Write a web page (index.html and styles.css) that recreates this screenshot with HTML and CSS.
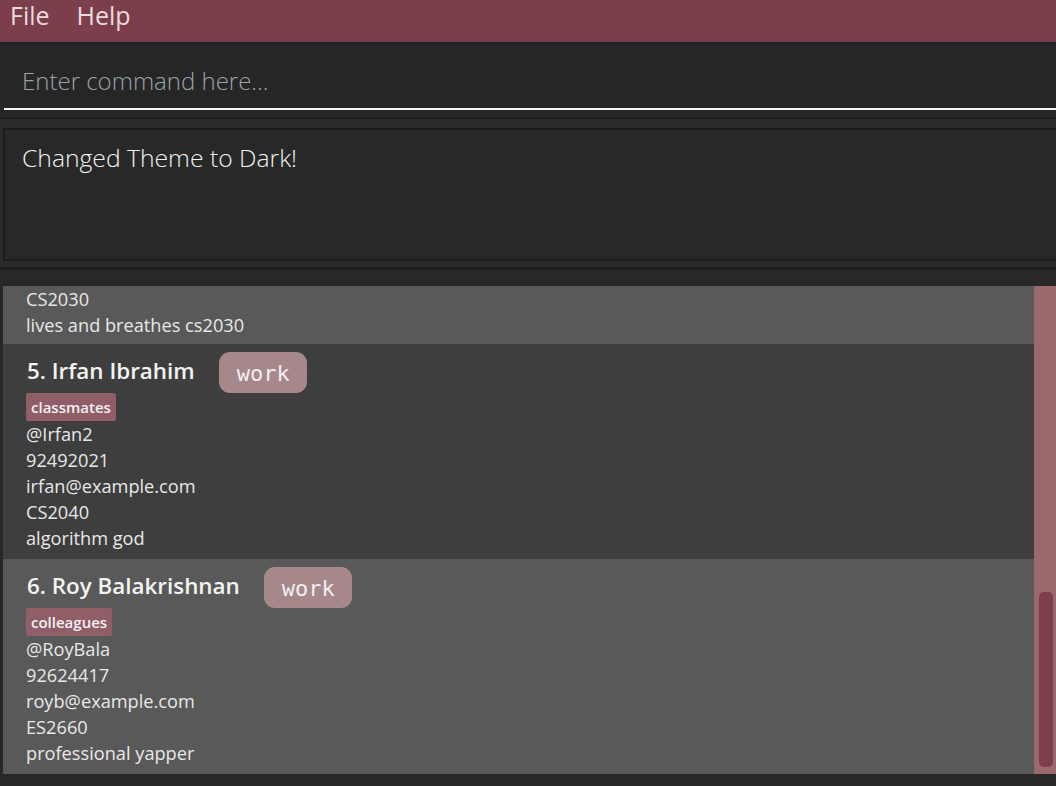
FILE: index.html
```html
<!DOCTYPE html>
<html lang="en">
<head>
<meta charset="utf-8">
<title>Address Book</title>
<link rel="stylesheet" href="styles.css">
</head>
<body>
<div class="app">
  <nav class="menubar">
    <span class="menu-item">File</span>
    <span class="menu-item">Help</span>
  </nav>
  <section class="command-pane">
    <div class="command-field">
      <input class="command-input" type="text" placeholder="Enter command here...">
    </div>
  </section>
  <section class="result-pane">
    <div class="result-box">Changed Theme to Dark!</div>
  </section>
  <section class="list-pane">
    <div class="list">
      <div class="card card-light card-partial">
        <div class="field">CS2030</div>
        <div class="field">lives and breathes cs2030</div>
      </div>
      <div class="card card-dark">
        <div class="name-row">
          <span class="name">5. Irfan Ibrahim</span>
          <span class="pill">work</span>
        </div>
        <div class="tags"><span class="tag">classmates</span></div>
        <div class="field">@Irfan2</div>
        <div class="field">92492021</div>
        <div class="field">irfan@example.com</div>
        <div class="field">CS2040</div>
        <div class="field">algorithm god</div>
      </div>
      <div class="card card-light">
        <div class="name-row">
          <span class="name">6. Roy Balakrishnan</span>
          <span class="pill">work</span>
        </div>
        <div class="tags"><span class="tag">colleagues</span></div>
        <div class="field">@RoyBala</div>
        <div class="field">92624417</div>
        <div class="field">royb@example.com</div>
        <div class="field">ES2660</div>
        <div class="field">professional yapper</div>
      </div>
    </div>
    <div class="scrollbar"><div class="thumb"></div></div>
  </section>
</div>
</body>
</html>
```
FILE: styles.css
```css
* { box-sizing: border-box; }
html, body { margin: 0; padding: 0; }
body {
  background: #282828;
  font-family: "Open Sans", "Noto Sans", sans-serif;
  width: 1056px;
  height: 786px;
  overflow: hidden;
}
.app { display: flex; flex-direction: column; height: 786px; }

.menubar {
  height: 43px;
  background: #7b3e4a;
  border-bottom: 1px solid #1d1d1d;
  display: flex;
  align-items: center;
  padding-left: 10px;
  gap: 27px;
}
.menu-item {
  color: #eadbdd;
  font-size: 25px;
  font-weight: 400;
  line-height: 30px;
  margin-top: -12px;
}

.command-pane {
  height: 76px;
  background: #262626;
  border-bottom: 2px solid #1d1d1d;
  padding: 0 0 0 4px;
}
.command-field {
  height: 67px;
  border-bottom: 2px solid #f2f2f2;
  display: flex;
  align-items: flex-end;
}
.command-input {
  width: 100%;
  background: transparent;
  border: none;
  outline: none;
  color: #f0f0f0;
  font-family: "Open Sans", sans-serif;
  font-weight: 300;
  font-size: 24px;
  padding: 0 0 11px 18px;
}
.command-input::placeholder { color: #98a4aa; opacity: 1; }

.result-pane {
  height: 151px;
  background: #2a2a2a;
  padding: 9px 0 0 3px;
  border-bottom: 3px solid #1d1d1d;
}
.result-box {
  height: 133px;
  background: #282828;
  border: 2px solid #1b1b1b;
  border-right: none;
  color: #f2f2f2;
  font-weight: 300;
  font-size: 24.7px;
  line-height: 32px;
  padding: 12px 0 0 17px;
}

.list-pane {
  margin-top: 16px;
  display: flex;
  height: 488px;
  padding-left: 3px;
}
.list { flex: 1; display: flex; flex-direction: column; overflow: hidden; }
.card { padding: 8px 0 8px 23px; height: 215px; flex: none; }
.card-light { background: #595959; }
.card-dark { background: #3e3e3e; }
.card-partial { height: 58px; padding-top: 0; }

.name-row { display: flex; align-items: center; gap: 24px; height: 41px; }
.name {
  color: #f3f3f3;
  font-weight: 600;
  font-size: 22.4px;
  line-height: 30px;
  padding-left: 1px;
  margin-top: -3px;
}
.pill {
  background: #a6878a;
  color: #f2eef2;
  font-family: "DejaVu Sans Mono", monospace;
  font-size: 22px;
  height: 41px;
  line-height: 43px;
  padding: 0 17px 0 18px;
  border-radius: 11px;
}
.tags { display: flex; height: 28px; }
.tag {
  background: #8f5e66;
  color: #f5f0f5;
  font-weight: 600;
  font-size: 15px;
  line-height: 28px;
  padding: 0 5px;
  border-radius: 2px;
}
.field {
  color: #e8e8e8;
  font-size: 18.2px;
  line-height: 26px;
}

.scrollbar {
  width: 22px;
  background: #9b686d;
  padding: 306px 3px 7px 5px;
}
.thumb {
  height: 175px;
  background: #7d3f4a;
  border-radius: 5px;
}
```
